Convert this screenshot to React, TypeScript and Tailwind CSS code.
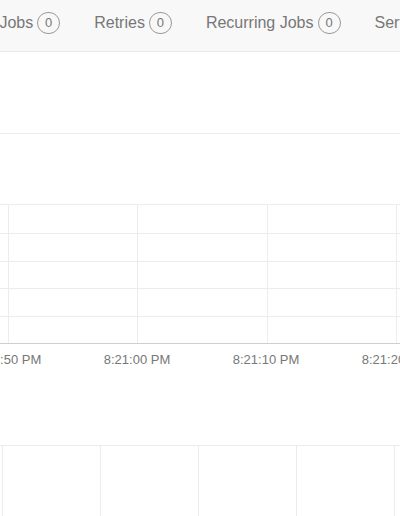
import React from 'react';

const NAV_ITEMS = [
  { label: 'Enqueued Jobs', count: 0 },
  { label: 'Retries', count: 0 },
  { label: 'Recurring Jobs', count: 0 },
  { label: 'Servers', count: 1 },
];

// chart grid, coords relative to the svg
const H_LINES = [72, 101, 129, 156, 184];
const V_LINES = [8.5, 137.5, 267.5, 396.5];
const TICKS = [
  { x: 8, label: '8:20:50 PM' },
  { x: 137, label: '8:21:00 PM' },
  { x: 266, label: '8:21:10 PM' },
  { x: 395, label: '8:21:20 PM' },
];
const BOTTOM_V = [2.5, 100.5, 198.5, 296.5, 394.5];

function App() {
  return (
    <div className="w-[400px] h-[516px] overflow-hidden bg-white" style={{ fontFamily: '"Liberation Sans", Arial, sans-serif' }}>
      {/* Navbar */}
      <div className="h-[52px] bg-[#f8f8f8] border-b border-[#e7e7e7] overflow-hidden">
        <ul className="flex items-center h-[45px] gap-[34px] ml-[-78px] whitespace-nowrap">
          {NAV_ITEMS.map(item => (
            <li key={item.label} className="flex items-center gap-[4px] text-[16px] text-[#777]">
              <span>{item.label}</span>
              <span className="h-[22px] min-w-[23px] px-[6px] rounded-full border border-[#999] flex items-center justify-center text-[13px] text-[#777] leading-none">
                {item.count}
              </span>
            </li>
          ))}
        </ul>
      </div>

      {/* Realtime graph */}
      <div className="pt-[80px]">
        <svg width="400" height="240" className="block">
          <line x1="0" x2="400" y1="1.5" y2="1.5" stroke="#ececec" />
          {H_LINES.map(y => (
            <line key={y} x1="0" x2="400" y1={y + 0.5} y2={y + 0.5} stroke="#ececec" />
          ))}
          {V_LINES.map(x => (
            <line key={x} x1={x} x2={x} y1="72" y2="211" stroke="#ececec" />
          ))}
          <line x1="0" x2="400" y1="211.5" y2="211.5" stroke="#cfcfcf" />
          {TICKS.map(t => (
            <text key={t.label} x={t.x} y="232" textAnchor="middle" fontSize="13" fill="#777" fontFamily='"Liberation Sans", Arial, sans-serif'>
              {t.label}
            </text>
          ))}
        </svg>
      </div>

      {/* History graph */}
      <div className="pt-[72px]">
        <svg width="400" height="80" className="block">
          <line x1="0" x2="400" y1="1.5" y2="1.5" stroke="#ececec" />
          {BOTTOM_V.map(x => (
            <line key={x} x1={x} x2={x} y1="1" y2="80" stroke="#ececec" />
          ))}
        </svg>
      </div>
    </div>
  );
}

export default App;
